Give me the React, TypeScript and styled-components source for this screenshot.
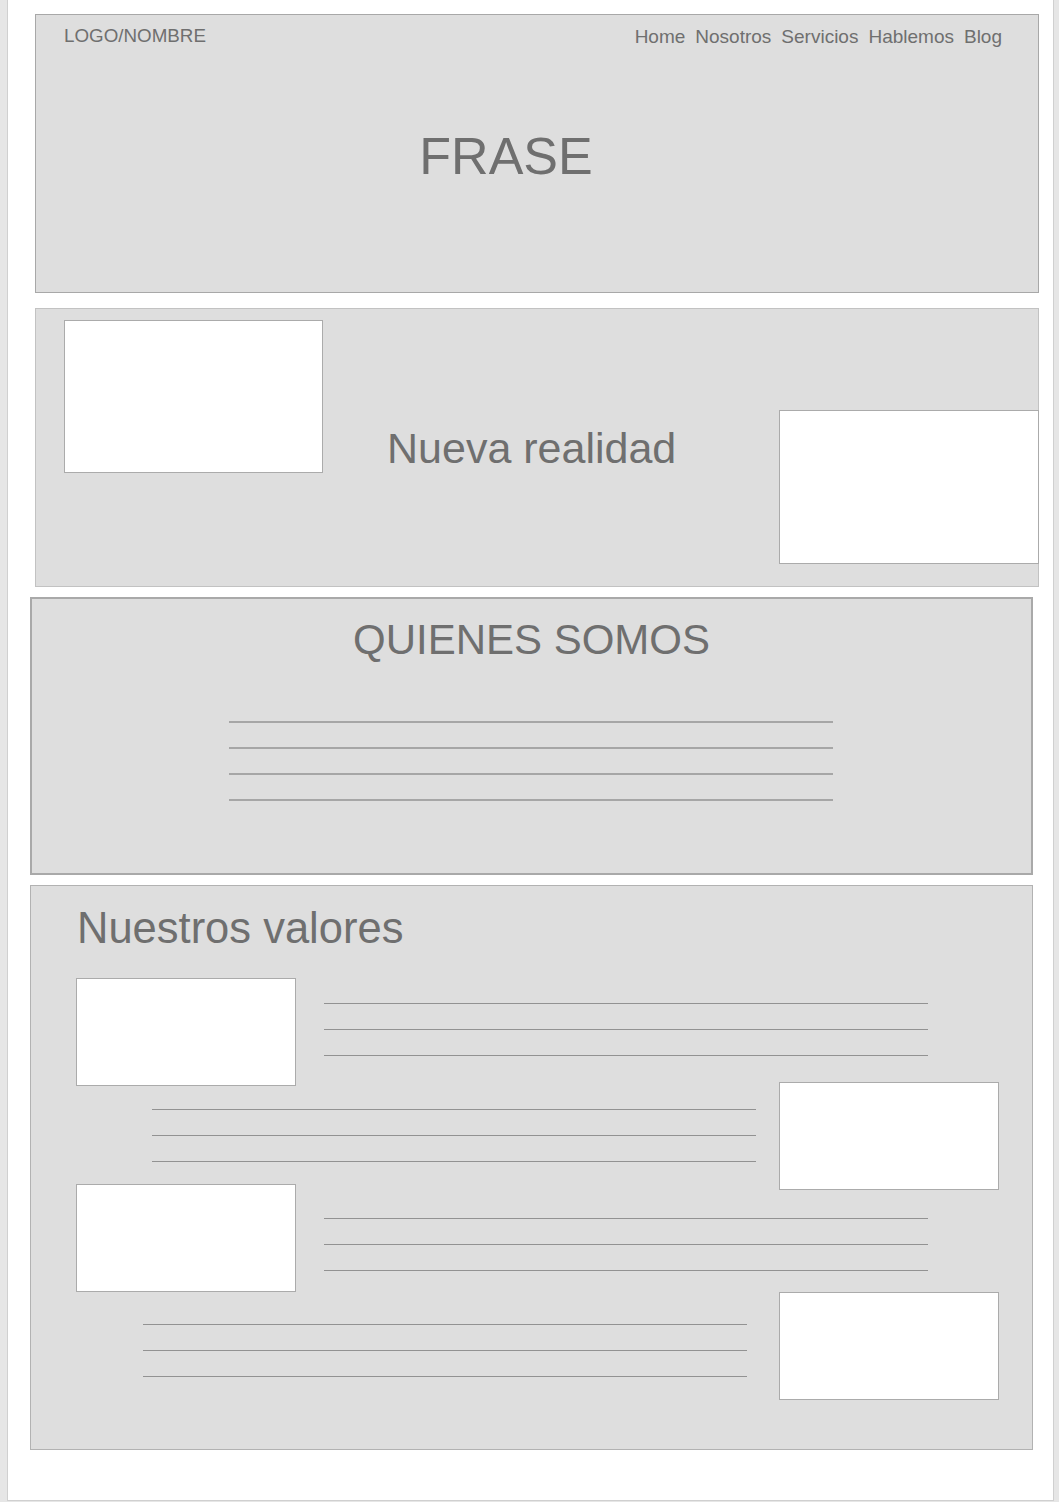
import React from 'react';
import styled, { createGlobalStyle } from 'styled-components';

const GlobalStyle = createGlobalStyle`
  html, body {
    margin: 0;
    padding: 0;
    background: #e6e6e6;
  }
  * {
    box-sizing: border-box;
  }
`;

const navItems = ['Home', 'Nosotros', 'Servicios', 'Hablemos', 'Blog'];

type ValueRowData = {
  reverse?: boolean;
  shift: number;
  lineTop: number;
  inset: number;
  gap: number;
};

const valueRows: ValueRowData[] = [
  { shift: 0, lineTop: 25, inset: 45, gap: 28 },
  { reverse: true, shift: -4, lineTop: 27, inset: 33, gap: 23 },
  { shift: -6, lineTop: 34, inset: 45, gap: 28 },
  { reverse: true, shift: 0, lineTop: 32, inset: 33, gap: 32 },
];

const App = () => {
  return (
    <>
      <GlobalStyle />
      <Sheet>
        <Hero>
          <NavBar>
            <Logo>LOGO/NOMBRE</Logo>
            <NavList>
              {navItems.map((item) => (
                <NavLink key={item}>{item}</NavLink>
              ))}
            </NavList>
          </NavBar>
          <Phrase>FRASE</Phrase>
        </Hero>

        <Reality>
          <Picture $w={259} $h={153} $top={11} />
          <Heading $size={43} $top={118}>
            Nueva realidad
          </Heading>
          <Picture $w={260} $h={154} $top={101} $push />
        </Reality>

        <About>
          <Heading $size={42} $top={20} $center>
            QUIENES SOMOS
          </Heading>
          <AboutLines>
            <Rule $thick />
            <Rule $thick />
            <Rule $thick />
            <Rule $thick />
          </AboutLines>
        </About>

        <Values>
          <ValuesTitle>Nuestros valores</ValuesTitle>
          <ValueList>
            {valueRows.map((row, i) => (
              <ValueRow key={i} $reverse={row.reverse} $shift={row.shift} $inset={row.inset} $gap={row.gap}>
                <Picture $w={220} $h={108} />
                <TextBlock $top={row.lineTop}>
                  <Rule />
                  <Rule />
                  <Rule />
                </TextBlock>
              </ValueRow>
            ))}
          </ValueList>
        </Values>
      </Sheet>
    </>
  );
};

const Sheet = styled.div`
  width: 1047px;
  height: 1501px;
  margin-left: 7px;
  padding-top: 14px;
  background: #ffffff;
  border-left: 1px solid #d0d0d0;
  border-right: 1px solid #d0d0d0;
  border-bottom: 1px solid #d0d0d0;
  font-family: 'Liberation Sans', Arial, Helvetica, sans-serif;
  color: #6f6f6f;
`;

const Panel = styled.section`
  background: #dedede;
  width: 1004px;
`;

const Hero = styled(Panel)`
  height: 279px;
  margin-left: 27px;
  border: 1px solid #a8a8a8;
  display: flex;
  flex-direction: column;
`;

const NavBar = styled.div`
  display: flex;
  justify-content: space-between;
  align-items: flex-start;
  padding: 12px 36px 0 28px;
`;

const Logo = styled.div`
  font-size: 18.8px;
  line-height: 1;
`;

const NavList = styled.nav`
  display: flex;
  gap: 10px;
`;

const NavLink = styled.span`
  font-size: 19px;
  line-height: 1;
`;

const Phrase = styled.h1`
  margin: 84px 62px 0 0;
  font-weight: 400;
  font-size: 52px;
  line-height: 1;
  text-align: center;
`;

const Reality = styled(Panel)`
  height: 279px;
  margin: 15px 0 0 27px;
  border: 1px solid #c2c2c2;
  display: flex;
  align-items: flex-start;
  padding-left: 28px;
`;

const Picture = styled.div<{ $w: number; $h: number; $top?: number; $push?: boolean }>`
  flex: none;
  width: ${(p) => p.$w}px;
  height: ${(p) => p.$h}px;
  margin-top: ${(p) => p.$top ?? 0}px;
  ${(p) => (p.$push ? 'margin-left: auto; margin-right: -1px;' : '')}
  background: #ffffff;
  border: 1px solid #ababab;
`;

const Heading = styled.h2<{ $size: number; $top: number; $center?: boolean }>`
  margin: ${(p) => p.$top}px 0 0 ${(p) => (p.$center ? 0 : 64)}px;
  font-weight: 400;
  font-size: ${(p) => p.$size}px;
  line-height: 1;
  text-align: ${(p) => (p.$center ? 'center' : 'left')};
`;

const About = styled(Panel)`
  width: 1003px;
  height: 278px;
  margin: 10px 0 0 22px;
  border: 2px solid #a9a9a9;
`;

const AboutLines = styled.div`
  width: 604px;
  margin: 60px 0 0 197px;
  display: flex;
  flex-direction: column;
  gap: 24px;
`;

const Rule = styled.div<{ $thick?: boolean }>`
  height: ${(p) => (p.$thick ? 2 : 1)}px;
  background: ${(p) => (p.$thick ? '#a6a6a6' : '#929292')};
`;

const Values = styled(Panel)`
  width: 1003px;
  height: 565px;
  margin: 10px 0 0 22px;
  border: 1px solid #b2b2b2;
  padding-top: 21px;
`;

const ValuesTitle = styled.h2`
  margin: 0 0 0 46px;
  font-weight: 400;
  font-size: 43.5px;
  line-height: 1;
`;

const ValueList = styled.div`
  margin-top: 27px;
  display: flex;
  flex-direction: column;
`;

const ValueRow = styled.div<{ $reverse?: boolean; $shift: number; $inset: number; $gap: number }>`
  display: flex;
  align-items: flex-start;
  flex-direction: ${(p) => (p.$reverse ? 'row-reverse' : 'row')};
  gap: ${(p) => p.$gap}px;
  margin-top: ${(p) => p.$shift}px;
  ${(p) => (p.$reverse ? `padding-right: ${p.$inset}px;` : `padding-left: ${p.$inset}px;`)}
`;

const TextBlock = styled.div<{ $top: number }>`
  width: 604px;
  margin-top: ${(p) => p.$top}px;
  display: flex;
  flex-direction: column;
  gap: 25px;
`;

export default App;
